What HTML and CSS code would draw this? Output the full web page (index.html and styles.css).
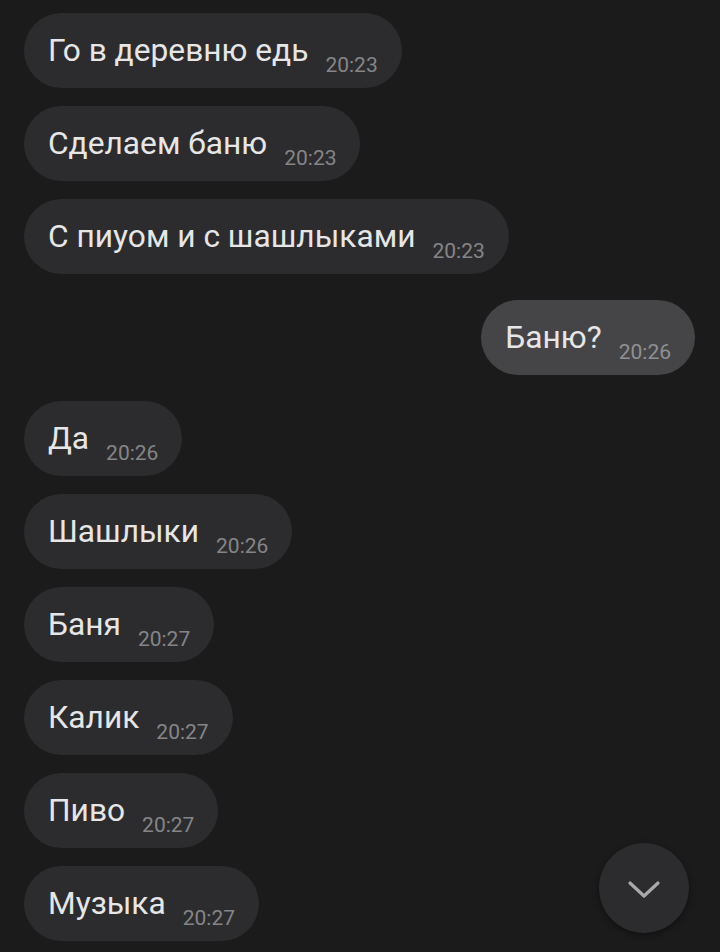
FILE: index.html
```html
<!DOCTYPE html>
<html lang="ru">
<head>
<meta charset="utf-8">
<link rel="stylesheet" href="styles.css">
</head>
<body>
<div class="chat">
  <div class="msg in"><span class="text">Го в деревню едь</span><span class="time">20:23</span></div>
  <div class="msg in"><span class="text">Сделаем баню</span><span class="time">20:23</span></div>
  <div class="msg in"><span class="text">С пиуом и с шашлыками</span><span class="time">20:23</span></div>
  <div class="msg out"><span class="text">Баню?</span><span class="time">20:26</span></div>
  <div class="msg in"><span class="text">Да</span><span class="time">20:26</span></div>
  <div class="msg in"><span class="text">Шашлыки</span><span class="time">20:26</span></div>
  <div class="msg in"><span class="text">Баня</span><span class="time">20:27</span></div>
  <div class="msg in"><span class="text">Калик</span><span class="time">20:27</span></div>
  <div class="msg in"><span class="text">Пиво</span><span class="time">20:27</span></div>
  <div class="msg in"><span class="text">Музыка</span><span class="time">20:27</span></div>
</div>
<button class="scroll-down" aria-label="Вниз">
  <svg width="34" height="20" viewBox="0 0 34 20"><path d="M3 3 L17 16 L31 3" fill="none" stroke="#a9a9ab" stroke-width="3.2" stroke-linecap="round" stroke-linejoin="round"/></svg>
</button>
</body>
</html>
```
FILE: styles.css
```css
html, body {
  margin: 0;
  padding: 0;
  background: #1b1b1b;
  height: 100%;
  overflow: hidden;
}
body {
  font-family: Roboto, "Noto Sans", sans-serif;
}
.chat {
  display: flex;
  flex-direction: column;
  align-items: flex-start;
  gap: 18px;
  padding: 13px 25px 0 24px;
}
.msg {
  display: flex;
  align-items: flex-start;
  box-sizing: border-box;
  height: 75px;
  padding: 22px 24px 0 24px;
  border-radius: 38px;
  background: #2c2c2e;
}
.msg.out {
  align-self: flex-end;
  background: #454547;
  margin: 8px 0;
}
.text {
  font-size: 31.7px;
  line-height: 32px;
  color: #e6e6e7;
}
.time {
  font-size: 21px;
  line-height: 21px;
  color: #858587;
  margin-top: 20px;
  margin-left: 17px;
}
.out .time {
  color: #909092;
}
.scroll-down {
  position: fixed;
  left: 599px;
  top: 843px;
  width: 90px;
  height: 90px;
  border-radius: 50%;
  border: none;
  padding: 0;
  background: #2c2c2e;
  box-shadow: 0 2px 6px rgba(0,0,0,0.45);
  display: flex;
  align-items: center;
  justify-content: center;
}
.scroll-down svg {
  margin-top: 4px;
}
```
